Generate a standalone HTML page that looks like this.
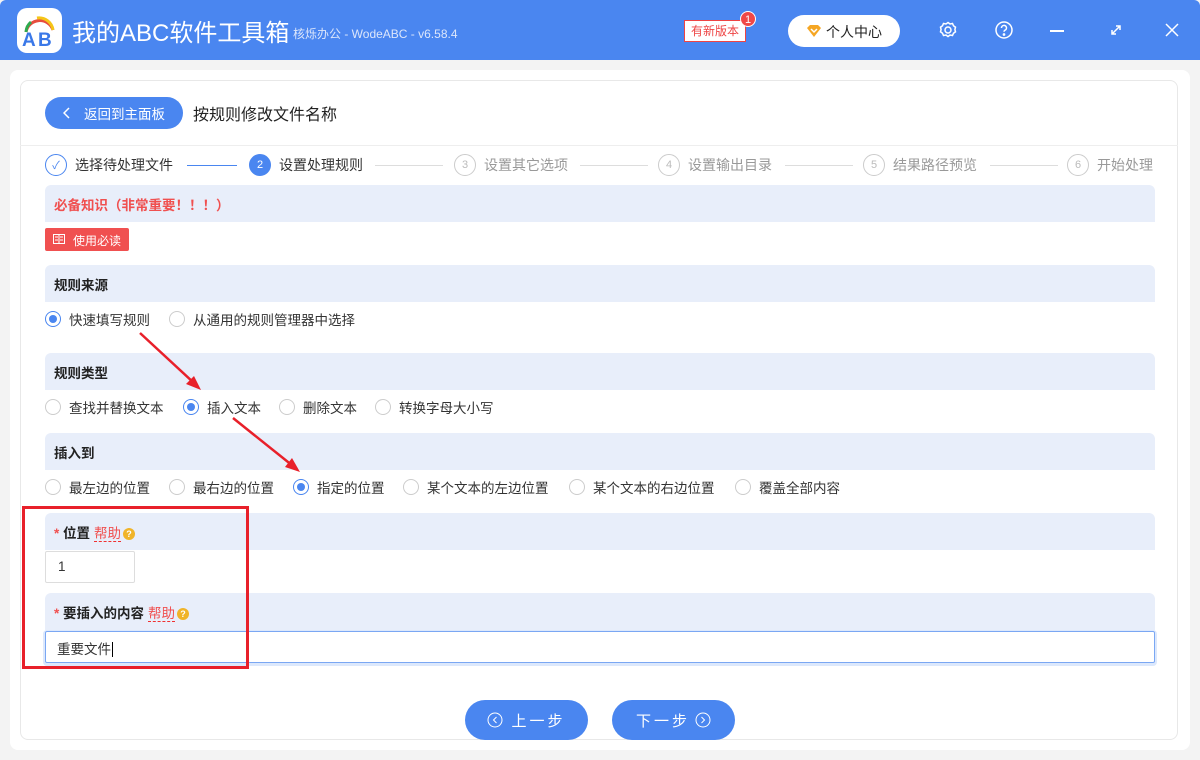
<!DOCTYPE html>
<html><head><meta charset="utf-8"><style>
*{box-sizing:border-box;margin:0;padding:0}
body{width:1200px;height:760px;overflow:hidden;background:#f3f3f3;font-family:"Liberation Sans","Noto Sans CJK SC",sans-serif;font-size:14px;color:#333;position:relative}
.abs{position:absolute}
.hdr{left:0;top:0;width:1200px;height:60px;background:#4a86f0;border-radius:6px 6px 0 0}
.sec{position:absolute;left:45px;width:1110px;height:37px;background:#e8eefa;border-radius:6px 6px 0 0;font-weight:bold;font-size:13.5px;color:#222;padding:9px 0 0 9px}
.rad{position:absolute;display:flex;align-items:center;font-size:13.5px;color:#333}
.r{width:16px;height:16px;border:1px solid #ccc;border-radius:50%;margin-right:8px;background:#fff;position:relative}
.r.on{border-color:#4a86f0}
.r.on:after{content:"";position:absolute;left:3px;top:3px;width:8px;height:8px;border-radius:50%;background:#4a86f0}
.step{position:absolute;top:154px;display:flex;align-items:center;font-size:14px;color:#999}
.sc{width:22px;height:22px;border:1px solid #ccc;border-radius:50%;display:flex;align-items:center;justify-content:center;font-size:11px;color:#bbb;margin-right:8px}
.ln{position:absolute;top:165px;height:1px;background:#ddd}
.help{color:#f05050;font-weight:normal;border-bottom:1px dashed #f03030;margin-left:4px}
.q{display:inline-block;width:12px;height:12px;border-radius:50%;background:#f0b429;color:#fff;font-size:9px;text-align:center;line-height:12px;margin-left:2px;vertical-align:1px}
.btn{position:absolute;top:700px;height:40px;border-radius:20px;background:#4a86f0;color:#fff;font-size:15px;display:flex;align-items:center;justify-content:center;letter-spacing:3px}
</style></head><body>
<div class="abs hdr"></div>
<div class="abs" style="left:17px;top:8px;width:45px;height:45px;background:#fff;border-radius:10px">
<svg width="45" height="45" viewBox="0 0 45 45"><path d="M9 24 A14 14 0 0 1 36 22" fill="none" stroke="#e84c3d" stroke-width="3"/><path d="M20 10 A14 14 0 0 1 36 22" fill="none" stroke="#f5c518" stroke-width="3"/><path d="M9 24 A14 14 0 0 1 14 14" fill="none" stroke="#2eaa4f" stroke-width="3"/><text x="5" y="38" font-family="Liberation Sans" font-weight="bold" font-size="19" fill="#3a78e8">A</text><text x="21" y="38" font-family="Liberation Sans" font-weight="bold" font-size="19" fill="#3a78e8">B</text></svg></div>
<div class="abs" style="left:72px;top:13px;font-size:24px;color:#fff">我的ABC软件工具箱</div>
<div class="abs" style="left:293px;top:25px;font-size:12px;color:#dce6fb">核烁办公 - WodeABC - v6.58.4</div>
<div class="abs" style="left:684px;top:20px;width:62px;height:22px;background:#fff;border:1px solid #e44;color:#e44;font-size:12px;text-align:center;line-height:20px">有新版本</div>
<div class="abs" style="left:740px;top:11px;width:16px;height:16px;border-radius:50%;background:#f04848;color:#fff;font-size:11px;text-align:center;line-height:16px;border:1px solid #fff">1</div>
<div class="abs" style="left:788px;top:15px;width:112px;height:32px;background:#fff;border-radius:16px;font-size:14px;color:#222;padding:7px 0 0 38px">个人中心</div>
<svg class="abs" style="left:806px;top:24px" width="16" height="14" viewBox="0 0 16 14"><path d="M1 4 L4 1 H12 L15 4 L8 13Z" fill="#f5a623"/><path d="M5 5 L8 8 L11 5" stroke="#fff" stroke-width="1.5" fill="none"/></svg>
<svg class="abs" style="left:938px;top:20px" width="20" height="20" viewBox="0 0 20 20" fill="none" stroke="#fff" stroke-width="1.5"><circle cx="10" cy="10" r="3"/><path d="M10 2.5l2 1.5 2.5-.5 1 2.3 2 1.4-.6 2.3.6 2.3-2 1.4-1 2.3-2.5-.5-2 1.5-2-1.5-2.5.5-1-2.3-2-1.4.6-2.3-.6-2.3 2-1.4 1-2.3 2.5.5z"/></svg>
<svg class="abs" style="left:994px;top:20px" width="20" height="20" viewBox="0 0 20 20" fill="none" stroke="#fff" stroke-width="1.5"><circle cx="10" cy="10" r="8"/><path d="M7.5 8a2.5 2.5 0 1 1 3.5 2.2c-.7.4-1 .9-1 1.6"/><circle cx="10" cy="14.5" r=".6" fill="#fff"/></svg>
<div class="abs" style="left:1050px;top:30px;width:14px;height:1.5px;background:#fff"></div>
<svg class="abs" style="left:1109px;top:23px" width="14" height="14" viewBox="0 0 14 14" stroke="#fff" stroke-width="1.5" fill="none"><path d="M3 11 L11 3 M7 3 H11 V7 M3 7 V11 H7"/></svg>
<svg class="abs" style="left:1165px;top:23px" width="14" height="14" viewBox="0 0 14 14" stroke="#fff" stroke-width="1.5"><path d="M1 1L13 13M13 1L1 13"/></svg>

<div class="abs" style="left:10px;top:70px;width:1180px;height:680px;background:#fff;border-radius:8px"></div>
<div class="abs" style="left:20px;top:80px;width:1158px;height:660px;border:1px solid #e8e8e8;border-radius:8px"></div>
<div class="abs" style="left:20px;top:145px;width:1158px;height:1px;background:#eee"></div>

<div class="abs" style="left:45px;top:97px;width:138px;height:32px;background:#4a86f0;border-radius:16px;color:#fff;font-size:13.5px;padding:6px 0 0 39px">返回到主面板</div>
<svg class="abs" style="left:63px;top:107px" width="8" height="12" viewBox="0 0 8 12" stroke="#fff" stroke-width="1.5" fill="none"><path d="M6 1L1 6L6 11"/></svg>
<div class="abs" style="left:193px;top:101px;font-size:16px;color:#222">按规则修改文件名称</div>

<div class="step" style="left:45px;color:#333"><div class="sc" style="border-color:#4a86f0;color:#4a86f0">✓</div>选择待处理文件</div>
<div class="ln" style="left:187px;width:50px;background:#4a86f0"></div>
<div class="step" style="left:249px;color:#333"><div class="sc" style="background:#4a86f0;border-color:#4a86f0;color:#fff">2</div>设置处理规则</div>
<div class="ln" style="left:375px;width:68px"></div>
<div class="step" style="left:454px"><div class="sc">3</div>设置其它选项</div>
<div class="ln" style="left:580px;width:68px"></div>
<div class="step" style="left:658px"><div class="sc">4</div>设置输出目录</div>
<div class="ln" style="left:785px;width:68px"></div>
<div class="step" style="left:863px"><div class="sc">5</div>结果路径预览</div>
<div class="ln" style="left:990px;width:68px"></div>
<div class="step" style="left:1067px"><div class="sc">6</div>开始处理</div>

<div class="sec" style="top:185px;color:#f05050">必备知识（非常重要！！！）</div>
<div class="abs" style="left:45px;top:228px;width:84px;height:23px;background:#f05050;border-radius:2px;color:#fff;font-size:12px;padding:4px 0 0 28px">使用必读</div>
<svg class="abs" style="left:53px;top:234px" width="12" height="10" viewBox="0 0 12 10" stroke="#fff" fill="none"><rect x=".5" y=".5" width="11" height="9"/><path d="M6 .5V9.5M2 3h3M7 3h3M2 6h3M7 6h3"/></svg>

<div class="sec" style="top:265px">规则来源</div>
<div class="rad" style="left:45px;top:309px"><div class="r on"></div>快速填写规则</div>
<div class="rad" style="left:169px;top:309px"><div class="r"></div>从通用的规则管理器中选择</div>

<div class="sec" style="top:353px">规则类型</div>
<div class="rad" style="left:45px;top:397px"><div class="r"></div>查找并替换文本</div>
<div class="rad" style="left:183px;top:397px"><div class="r on"></div>插入文本</div>
<div class="rad" style="left:279px;top:397px"><div class="r"></div>删除文本</div>
<div class="rad" style="left:375px;top:397px"><div class="r"></div>转换字母大小写</div>

<div class="sec" style="top:433px">插入到</div>
<div class="rad" style="left:45px;top:477px"><div class="r"></div>最左边的位置</div>
<div class="rad" style="left:169px;top:477px"><div class="r"></div>最右边的位置</div>
<div class="rad" style="left:293px;top:477px"><div class="r on"></div>指定的位置</div>
<div class="rad" style="left:403px;top:477px"><div class="r"></div>某个文本的左边位置</div>
<div class="rad" style="left:569px;top:477px"><div class="r"></div>某个文本的右边位置</div>
<div class="rad" style="left:735px;top:477px"><div class="r"></div>覆盖全部内容</div>

<div class="sec" style="top:513px"><span style="color:#f05050">*</span> 位置<span class="help">帮助</span><span class="q">?</span></div>
<div class="abs" style="left:45px;top:551px;width:90px;height:32px;border:1px solid #ddd;border-radius:2px;padding:7px 0 0 12px;font-size:13.5px">1</div>
<div class="sec" style="top:593px"><span style="color:#f05050">*</span> 要插入的内容<span class="help">帮助</span><span class="q">?</span></div>
<div class="abs" style="left:45px;top:631px;width:1110px;height:32px;border:1px solid #7aa7f3;border-radius:2px;padding:6px 0 0 11px;font-size:13.5px;box-shadow:0 1px 0 2px #dce8fc">重要文件<span style="border-left:1px solid #000;margin-left:1px"></span></div>

<div class="abs" style="left:22px;top:506px;width:227px;height:163px;border:3px solid #e8202a"></div>

<svg class="abs" style="left:0;top:0" width="1200" height="760"><g stroke="#e8202a" stroke-width="2.5" fill="#e8202a"><line x1="140" y1="333" x2="194" y2="383"/><polygon points="201,390 186,384 194,376" stroke="none"/><line x1="233" y1="418" x2="293" y2="466"/><polygon points="300,472 285,467 292,458" stroke="none"/></g></svg>

<div class="btn" style="left:465px;width:123px"><svg width="16" height="16" viewBox="0 0 16 16" stroke="#fff" fill="none" style="margin-right:8px"><circle cx="8" cy="8" r="7"/><path d="M9.5 5L6.5 8L9.5 11"/></svg>上一步</div>
<div class="btn" style="left:612px;width:123px">下一步<svg width="16" height="16" viewBox="0 0 16 16" stroke="#fff" fill="none" style="margin-left:5px"><circle cx="8" cy="8" r="7"/><path d="M6.5 5L9.5 8L6.5 11"/></svg></div>
</body></html>
